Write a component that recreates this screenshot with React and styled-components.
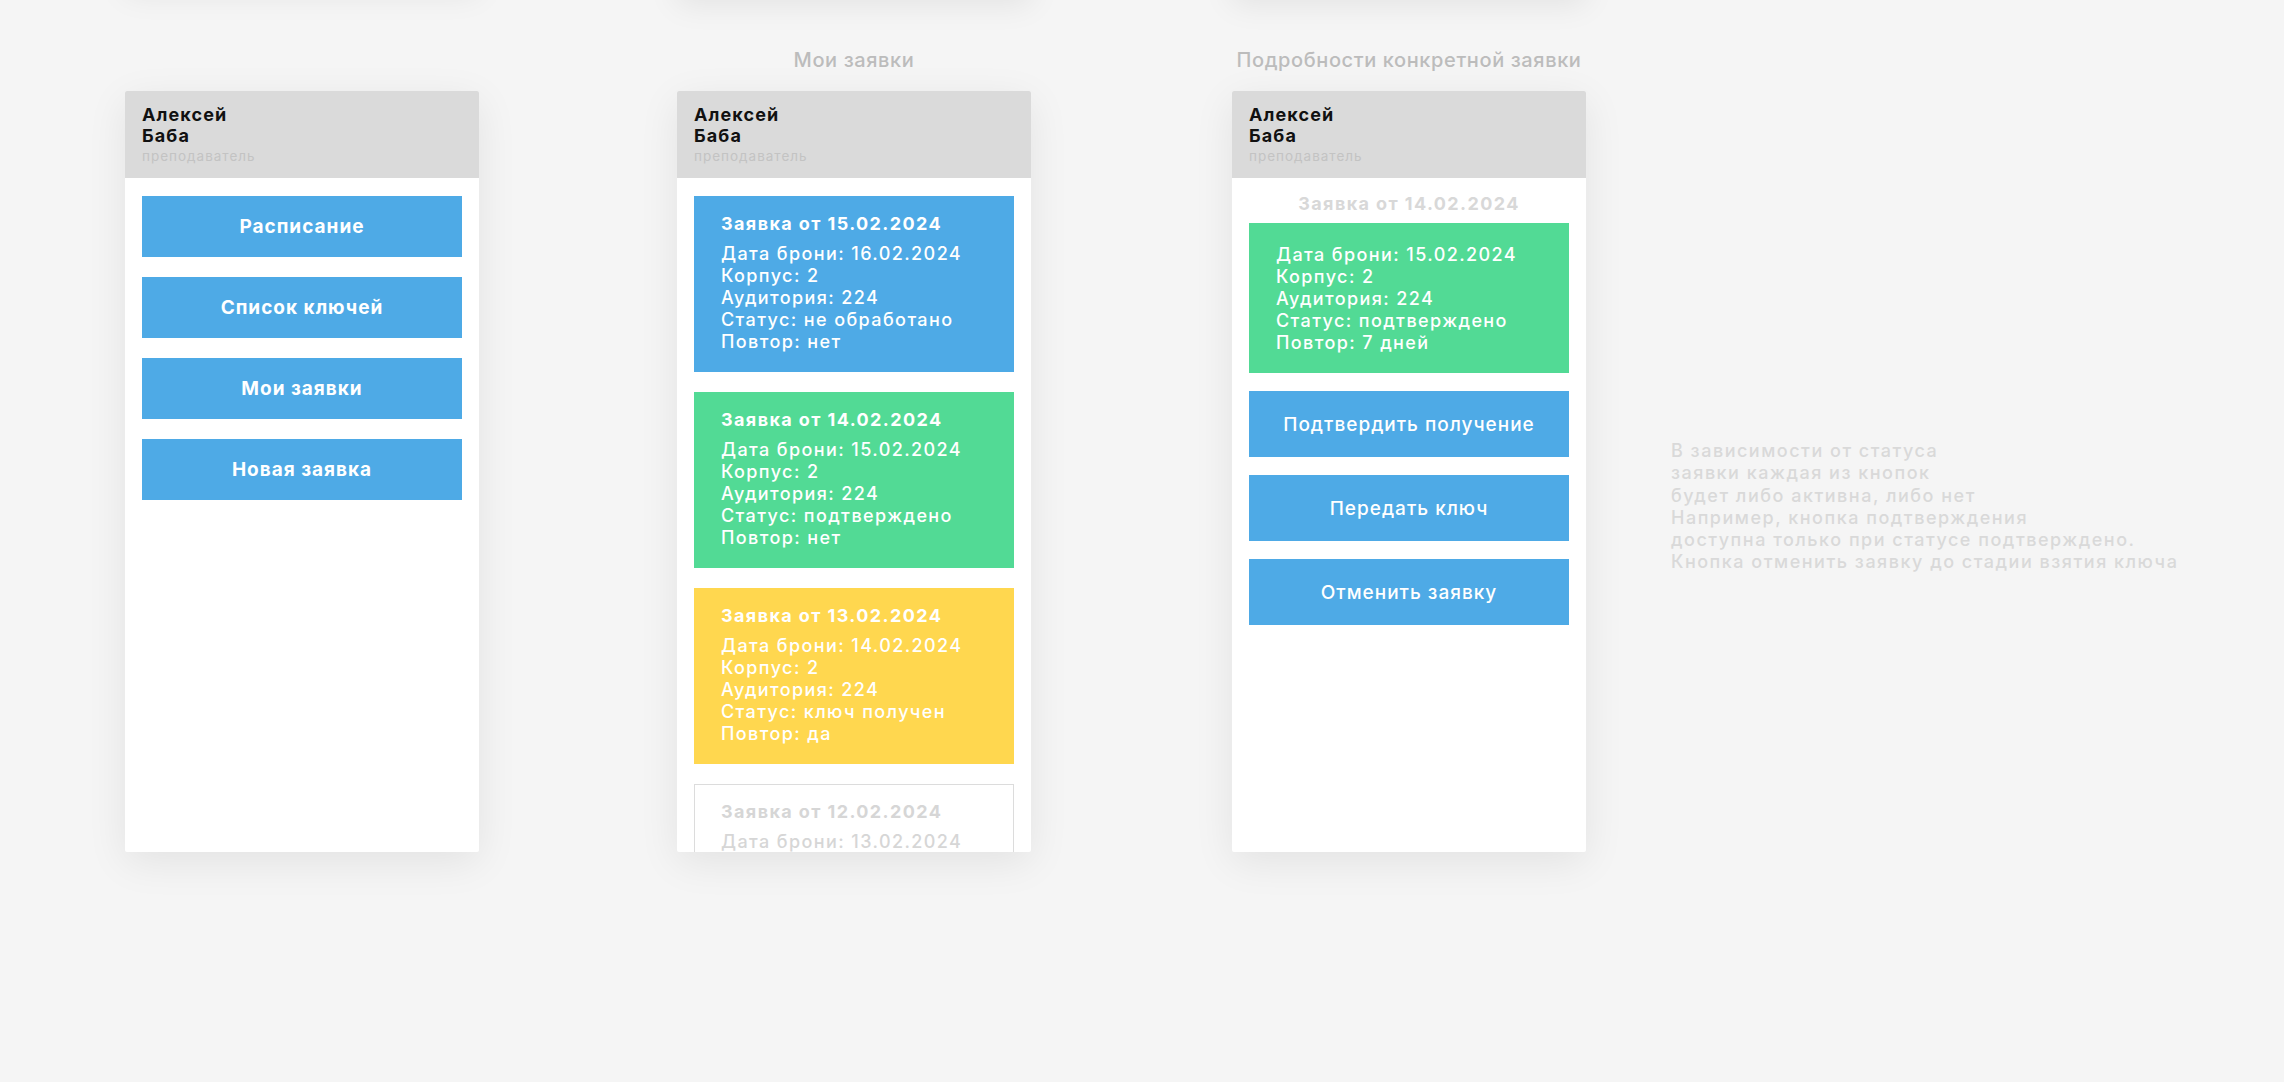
import React from "react";
import styled, { createGlobalStyle } from "styled-components";

const Global = createGlobalStyle`
  html, body { margin: 0; padding: 0; background: #f5f5f5; }
  body { font-family: Inter, "Open Sans", "Noto Sans", sans-serif; -webkit-font-smoothing: antialiased; }
  * { box-sizing: border-box; }
`;

const Page = styled.div`
  width: 2284px;
  height: 1082px;
  overflow: hidden;
  display: flex;
  align-items: flex-start;
  padding-left: 125px;
  background: #f5f5f5;
`;

const Column = styled.div`
  width: 354px;
  margin-right: ${(p) => p.$gap}px;
  display: flex;
  flex-direction: column;
  flex-shrink: 0;
`;

const Ghost = styled.div`
  height: 200px;
  margin-top: ${(p) => -200 - p.$lift}px;
  background: #f5f5f5;
  box-shadow: 0 8px 30px rgba(0, 0, 0, 0.08);
`;

const ScreenTitle = styled.div`
  height: 24px;
  margin-top: ${(p) => 48 + p.$lift}px;
  margin-bottom: 19px;
  text-align: center;
  font-size: 20px;
  line-height: 24px;
  font-weight: 500;
  letter-spacing: 0.6px;
  color: #bcbcbc;
  white-space: nowrap;
`;

const Panel = styled.div`
  width: 354px;
  height: 761px;
  background: #ffffff;
  border-radius: 2px;
  overflow: hidden;
  box-shadow: 0 10px 40px rgba(0, 0, 0, 0.08);
  display: flex;
  flex-direction: column;
`;

const Header = styled.div`
  height: 87px;
  flex-shrink: 0;
  background: #dadada;
  padding: 13px 17px 0;
`;

const Name = styled.div`
  font-size: 18px;
  line-height: 21px;
  font-weight: 700;
  letter-spacing: 1.1px;
  color: #111111;
`;

const Role = styled.div`
  margin-top: 2px;
  font-size: 13.5px;
  line-height: 17px;
  font-weight: 400;
  letter-spacing: 1px;
  color: #c3c3c3;
`;

const Body = styled.div`
  flex: 1;
  padding: ${(p) => p.$top}px 17px 0;
  display: flex;
  flex-direction: column;
  gap: ${(p) => p.$gap}px;
`;

const MenuButton = styled.div`
  height: ${(p) => p.$h}px;
  flex-shrink: 0;
  background: #4eaae6;
  color: #ffffff;
  display: flex;
  align-items: center;
  justify-content: center;
  font-size: 19px;
  letter-spacing: 1px;
  font-weight: ${(p) => p.$weight};
`;

const palette = {
  blue: { bg: "#4eaae6", fg: "#ffffff", border: "#4eaae6" },
  green: { bg: "#52da95", fg: "#ffffff", border: "#52da95" },
  yellow: { bg: "#ffd74f", fg: "#ffffff", border: "#ffd74f" },
  empty: { bg: "#ffffff", fg: "#d6d6d6", border: "#dcdcdc" },
};

const Card = styled.div`
  flex-shrink: 0;
  background: ${(p) => palette[p.$tone].bg};
  color: ${(p) => palette[p.$tone].fg};
  border: 1px solid ${(p) => palette[p.$tone].border};
  padding: ${(p) => p.$pt}px 26px 18px;
`;

const CardTitle = styled.div`
  font-size: 18px;
  line-height: 22px;
  font-weight: 700;
  letter-spacing: 1.4px;
  margin-bottom: 8px;
  white-space: nowrap;
`;

const CardLine = styled.div`
  font-size: 18px;
  line-height: 22px;
  font-weight: 500;
  letter-spacing: 1.4px;
  white-space: nowrap;
`;

const DetailTitle = styled.div`
  text-align: center;
  font-size: 18px;
  line-height: 22px;
  font-weight: 700;
  letter-spacing: 1.4px;
  color: #d8d8d8;
  margin-bottom: -10px;
`;

const Note = styled.div`
  margin-top: 440px;
  font-size: 18px;
  line-height: 22.3px;
  font-weight: 500;
  letter-spacing: 1.5px;
  color: #d9d9d9;
  white-space: nowrap;
`;

const requests = [
  { tone: "blue", from: "15.02.2024", date: "16.02.2024", status: "не обработано", repeat: "нет" },
  { tone: "green", from: "14.02.2024", date: "15.02.2024", status: "подтверждено", repeat: "нет" },
  { tone: "yellow", from: "13.02.2024", date: "14.02.2024", status: "ключ получен", repeat: "да" },
  { tone: "empty", from: "12.02.2024", date: "13.02.2024", status: "ключ сдан", repeat: "нет" },
];

function UserHeader() {
  return (
    <Header>
      <Name>Алексей</Name>
      <Name>Баба</Name>
      <Role>преподаватель</Role>
    </Header>
  );
}

function Details({ r }) {
  return (
    <>
      <CardLine>Дата брони: {r.date}</CardLine>
      <CardLine>Корпус: 2</CardLine>
      <CardLine>Аудитория: 224</CardLine>
      <CardLine>Статус: {r.status}</CardLine>
      <CardLine>Повтор: {r.repeat}</CardLine>
    </>
  );
}

export default function App() {
  return (
    <>
      <Global />
      <Page>
        <Column $gap={198}>
          <Ghost $lift={14} />
          <ScreenTitle $lift={14} />
          <Panel>
            <UserHeader />
            <Body $top={18} $gap={20}>
              {["Расписание", "Список ключей", "Мои заявки", "Новая заявка"].map((t) => (
                <MenuButton key={t} $h={61} $weight={700}>
                  {t}
                </MenuButton>
              ))}
            </Body>
          </Panel>
        </Column>

        <Column $gap={201}>
          <Ghost $lift={4} />
          <ScreenTitle $lift={4}>Мои заявки</ScreenTitle>
          <Panel>
            <UserHeader />
            <Body $top={18} $gap={20}>
              {requests.map((r) => (
                <Card key={r.from} $tone={r.tone} $pt={16}>
                  <CardTitle>Заявка от {r.from}</CardTitle>
                  <Details r={r} />
                </Card>
              ))}
            </Body>
          </Panel>
        </Column>

        <Column $gap={85}>
          <Ghost $lift={4} />
          <ScreenTitle $lift={4}>Подробности конкретной заявки</ScreenTitle>
          <Panel>
            <UserHeader />
            <Body $top={15} $gap={18}>
              <DetailTitle>Заявка от 14.02.2024</DetailTitle>
              <Card $tone="green" $pt={20}>
                <Details r={{ date: "15.02.2024", status: "подтверждено", repeat: "7 дней" }} />
              </Card>
              {["Подтвердить получение", "Передать ключ", "Отменить заявку"].map((t) => (
                <MenuButton key={t} $h={66} $weight={500}>
                  {t}
                </MenuButton>
              ))}
            </Body>
          </Panel>
        </Column>

        <Note>
          В зависимости от статуса
          <br />
          заявки каждая из кнопок
          <br />
          будет либо активна, либо нет
          <br />
          Например, кнопка подтверждения
          <br />
          доступна только при статусе подтверждено.
          <br />
          Кнопка отменить заявку до стадии взятия ключа
        </Note>
      </Page>
    </>
  );
}
